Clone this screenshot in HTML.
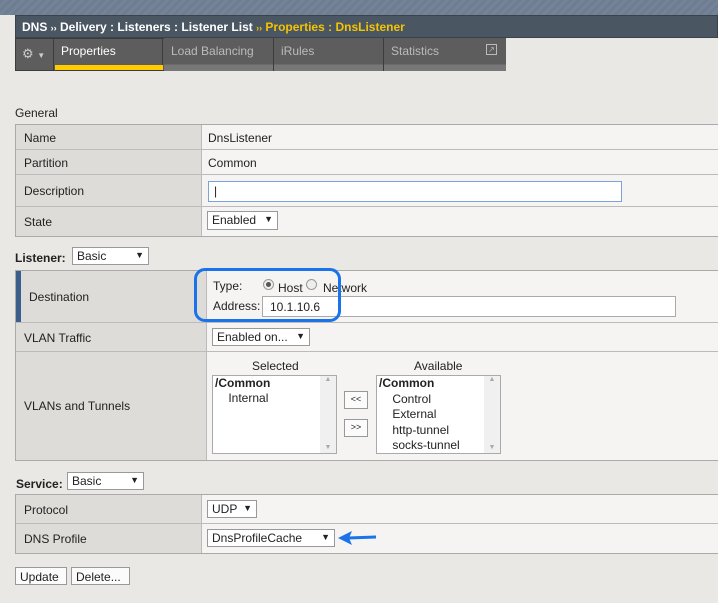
<!DOCTYPE html>
<html><head><style>
*{box-sizing:border-box;margin:0;padding:0}
body{width:718px;height:603px;background:#e9e8e4;font-family:"Liberation Sans",sans-serif;font-size:12px;color:#222;position:relative;overflow:hidden}
.a{position:absolute}
.sel{position:absolute;background:#fff;border:1px solid #999;height:18px;padding:1px 4px;font-size:12px}
.sel:after{content:"▼";position:absolute;right:4px;top:2px;font-size:9px}
.lab{position:absolute;background:#dedcd9;border-right:1px solid #bbb;padding-left:8px;display:flex;align-items:center}
.val{position:absolute;background:#f5f4f2;display:flex;align-items:center;padding-left:6px}
.hl{position:absolute;height:1px;background:#bbb}
.tbl{position:absolute;border:1px solid #aaa;border-bottom:2px solid #aaa}
.btn{position:absolute;background:#fbfbfb;border:1px solid #999;padding:2px 4px;font-size:12px;height:18px}
.lb{position:absolute;background:#fff;border:1px solid #aaa}
.sb{position:absolute;right:0;top:0;bottom:0;width:16px;background:#f0f0f0;font-size:7px;color:#aaa;text-align:center}
</style></head><body>
<div class="a" style="left:0;top:0;width:718px;height:15px;background:repeating-linear-gradient(135deg,#6e7d90 0 3px,#74839a 3px 6px)"></div>
<div class="a" style="left:15px;top:15px;width:703px;height:23px;background:#4b5663;border:1px solid #3a424c;color:#fff;font-weight:bold;font-size:12px;padding:4px 6px">DNS <span style="font-size:9px">››</span> Delivery : Listeners : Listener List <span style="color:#f5c400;font-size:9px">››</span> <span style="color:#f5c400">Properties : DnsListener</span></div>
<div class="a" style="left:15px;top:38px;width:491px;height:33px;background:#5d5d5d;border:1px solid #3c3c3c"></div>
<div class="a" style="left:15px;top:38px;width:39px;height:33px;border-right:1px solid #3c3c3c;color:#ccc;font-size:13px;padding:8px 7px">⚙ <span style="font-size:8px">▼</span></div>
<div class="a" style="left:54px;top:38px;width:109px;height:33px;border-right:1px solid #3c3c3c;color:#fff;padding:6px 7px">Properties<div class="a" style="left:1px;bottom:1px;width:108px;height:5px;background:#fc0"></div></div>
<div class="a" style="left:164px;top:38px;width:110px;height:33px;border-right:1px solid #3c3c3c;color:#bbb;padding:6px 7px;background:linear-gradient(#5d5d5d 80%,#777 80%)">Load Balancing</div>
<div class="a" style="left:274px;top:38px;width:110px;height:33px;border-right:1px solid #3c3c3c;color:#bbb;padding:6px 7px;background:linear-gradient(#5d5d5d 80%,#777 80%)">iRules</div>
<div class="a" style="left:384px;top:38px;width:122px;height:33px;color:#bbb;padding:6px 7px;background:linear-gradient(#5d5d5d 80%,#777 80%)">Statistics<span class="a" style="left:102px;top:6px;width:11px;height:11px;border:1px solid #bbb;font-size:8px;line-height:9px;text-align:center">↗</span></div>

<div class="a" style="left:15px;top:106px">General</div>
<div class="tbl" style="left:15px;top:124px;width:704px;height:113px">
<div class="lab" style="left:0;top:0;width:186px;height:25px">Name</div><div class="val" style="left:186px;top:0;width:520px;height:25px">DnsListener</div>
<div class="lab" style="left:0;top:25px;width:186px;height:25px">Partition</div><div class="val" style="left:186px;top:25px;width:520px;height:25px">Common</div>
<div class="lab" style="left:0;top:50px;width:186px;height:32px">Description</div><div class="val" style="left:186px;top:50px;width:520px;height:32px"><div style="width:414px;height:21px;background:#fff;border:1px solid #7aa3d9;padding:2px 5px">|</div></div>
<div class="lab" style="left:0;top:82px;width:186px;height:29px">State</div><div class="val" style="left:186px;top:82px;width:520px;height:29px"></div>
<div class="hl" style="left:0;top:24px;width:704px"></div><div class="hl" style="left:0;top:49px;width:704px"></div><div class="hl" style="left:0;top:81px;width:704px"></div>
</div>
<div class="sel" style="left:207px;top:211px;width:71px;height:19px">Enabled</div>

<div class="a" style="left:15px;top:251px;font-weight:bold;font-size:12px">Listener:</div>
<div class="sel" style="left:72px;top:247px;width:77px">Basic</div>
<div class="tbl" style="left:15px;top:270px;width:704px;height:191px">
<div class="lab" style="left:0;top:0;width:191px;height:52px;border-left:5px solid #3b5f8a;padding-left:8px">Destination</div><div class="val" style="left:191px;top:0;width:520px;height:52px"></div>
<div class="lab" style="left:0;top:52px;width:191px;height:29px">VLAN Traffic</div><div class="val" style="left:191px;top:52px;width:520px;height:29px"></div>
<div class="lab" style="left:0;top:81px;width:191px;height:108px">VLANs and Tunnels</div><div class="val" style="left:191px;top:81px;width:520px;height:108px"></div>
<div class="hl" style="left:0;top:51px;width:704px"></div><div class="hl" style="left:0;top:80px;width:704px"></div>
</div>
<div class="a" style="left:213px;top:279px">Type:</div>
<div class="a" style="left:263px;top:279px;width:11px;height:11px;border-radius:50%;border:1px solid #999;background:#eee"><div style="margin:2px;width:5px;height:5px;border-radius:50%;background:#555"></div></div>
<div class="a" style="left:278px;top:281px">Host</div>
<div class="a" style="left:306px;top:279px;width:11px;height:11px;border-radius:50%;border:1px solid #999;background:#eee"></div>
<div class="a" style="left:323px;top:281px">Network</div>
<div class="a" style="left:213px;top:299px">Address:</div>
<div class="a" style="left:262px;top:296px;width:414px;height:21px;background:#fff;border:1px solid #aaa;padding:3px 7px">10.1.10.6</div>
<div class="a" style="left:194px;top:268px;width:147px;height:54px;border:3px solid #1a73e8;border-radius:11px"></div>
<div class="sel" style="left:212px;top:328px;width:98px">Enabled on...</div>
<div class="a" style="left:252px;top:359px">Selected</div>
<div class="a" style="left:414px;top:359px">Available</div>
<div class="lb" style="left:212px;top:375px;width:125px;height:79px"><div style="padding:0 2px;line-height:15px"><b>/Common</b><br>&nbsp;&nbsp;&nbsp;&nbsp;Internal</div><div class="sb">▲<div style="position:absolute;bottom:2px;width:16px">▼</div></div></div>
<div class="lb" style="left:376px;top:375px;width:125px;height:79px"><div style="padding:0 2px;line-height:15.5px"><b>/Common</b><br>&nbsp;&nbsp;&nbsp;&nbsp;Control<br>&nbsp;&nbsp;&nbsp;&nbsp;External<br>&nbsp;&nbsp;&nbsp;&nbsp;http-tunnel<br>&nbsp;&nbsp;&nbsp;&nbsp;socks-tunnel</div><div class="sb">▲<div style="position:absolute;bottom:2px;width:16px">▼</div></div></div>
<div class="btn" style="left:344px;top:391px;width:24px;font-size:9px;text-align:center">&lt;&lt;</div>
<div class="btn" style="left:344px;top:419px;width:24px;font-size:9px;text-align:center">&gt;&gt;</div>

<div class="a" style="left:16px;top:477px;font-weight:bold">Service:</div>
<div class="sel" style="left:67px;top:472px;width:77px">Basic</div>
<div class="tbl" style="left:15px;top:494px;width:704px;height:60px">
<div class="lab" style="left:0;top:0;width:186px;height:29px">Protocol</div><div class="val" style="left:186px;top:0;width:520px;height:29px"></div>
<div class="lab" style="left:0;top:29px;width:186px;height:29px">DNS Profile</div><div class="val" style="left:186px;top:29px;width:520px;height:29px"></div>
<div class="hl" style="left:0;top:28px;width:704px"></div>
</div>
<div class="sel" style="left:207px;top:500px;width:50px">UDP</div>
<div class="sel" style="left:207px;top:529px;width:128px">DnsProfileCache</div>
<svg class="a" style="left:336px;top:530px" width="42" height="16"><path d="M40 7 L12 8" stroke="#1a73e8" stroke-width="3"/><path d="M2 8 L16 1 L13 8 L16 15 Z" fill="#1a73e8"/></svg>
<div class="btn" style="left:15px;top:567px;width:52px">Update</div>
<div class="btn" style="left:71px;top:567px;width:59px">Delete...</div>
</body></html>
